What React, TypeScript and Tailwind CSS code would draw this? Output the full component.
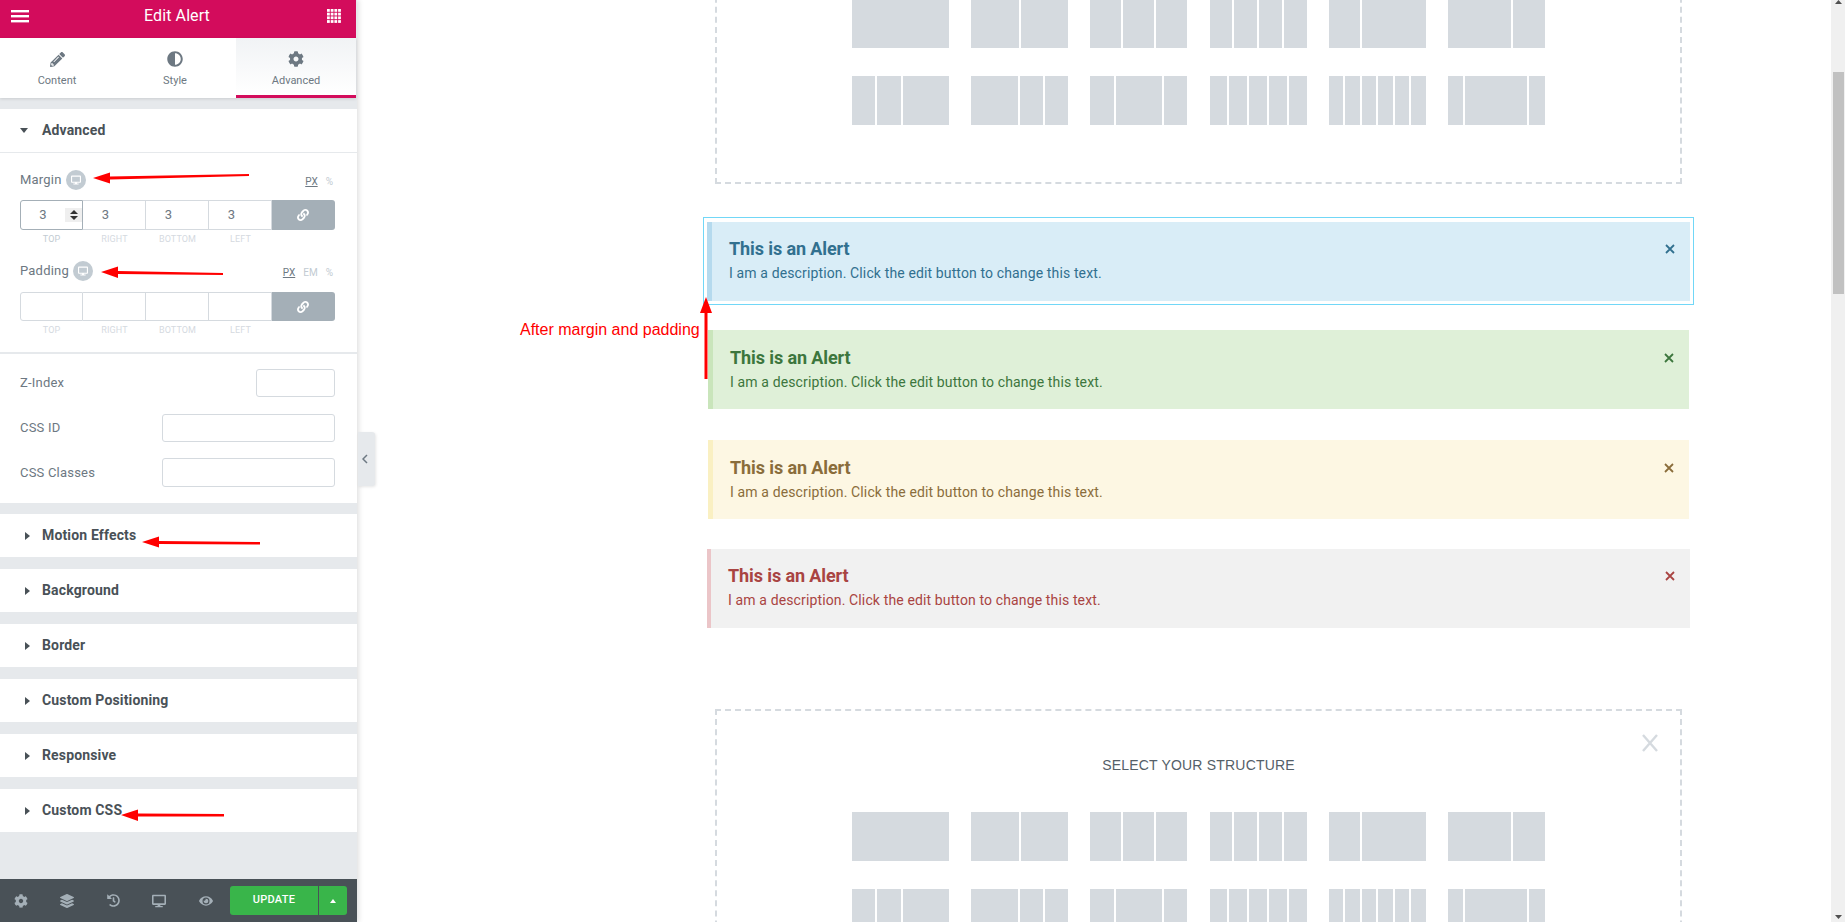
import React from "react";
import { FaPencilAlt, FaAdjust, FaCog, FaLayerGroup, FaHistory, FaDesktop, FaEye, FaLink } from "react-icons/fa";

const presets: string[][][] = [
  [
    ["flex-1"],
    ["flex-1", "flex-1"],
    ["flex-1", "flex-1", "flex-1"],
    ["flex-1", "flex-1", "flex-1", "flex-1"],
    ["flex-1", "flex-[2]"],
    ["flex-[2]", "flex-1"],
  ],
  [
    ["flex-1", "flex-1", "flex-[2]"],
    ["flex-[2]", "flex-1", "flex-1"],
    ["flex-1", "flex-[2]", "flex-1"],
    ["flex-1", "flex-1", "flex-1", "flex-1", "flex-1"],
    ["flex-1", "flex-1", "flex-1", "flex-1", "flex-1", "flex-1"],
    ["flex-1", "flex-[4]", "flex-1"],
  ],
];

function StructureBox({ className, title }: { className: string; title?: boolean }) {
  return (
    <div className={"relative shrink-0 w-[967px] ml-[358px] h-[288px] border-2 border-dashed border-[#d5dadf] " + className}>
      {title ? (
        <>
          <svg className="absolute left-[924px] top-[23px]" width="18" height="18" viewBox="0 0 18 18">
            <path d="M2 1 L16 17 M16 1 L2 17" stroke="#d5dadf" strokeWidth="2.4" fill="none" />
          </svg>
          <div className="pt-[44px] text-center text-[14px] tracking-[0.2px] leading-[20px] text-[#556068] font-['Liberation_Sans',sans-serif]">
            SELECT YOUR STRUCTURE
          </div>
        </>
      ) : (
        <div className="h-[64px]" />
      )}
      <div className="ml-[135px] mt-[37px] w-[693px] flex flex-col gap-[28px]">
        {presets.map((row, i) => (
          <div key={i} className="flex justify-between">
            {row.map((cols, j) => (
              <div key={j} className="flex gap-[2px] w-[97px] h-[49px]">
                {cols.map((c, k) => (
                  <div key={k} className={c + " bg-[#d5dadf]"} />
                ))}
              </div>
            ))}
          </div>
        ))}
      </div>
    </div>
  );
}

function Alert({ box, color, closeTop }: { box: string; color: string; closeTop: string }) {
  return (
    <div className={"relative h-[79px] pl-[17px] font-['Roboto',sans-serif] " + box}>
      <div className={"text-[18px] leading-[22px] font-bold tracking-[-0.1px] " + color}>This is an Alert</div>
      <div className={"mt-[3px] text-[14px] tracking-[0.13px] leading-[20px] " + color}>I am a description. Click the edit button to change this text.</div>
      <svg className={"absolute right-[15px] " + closeTop + " " + color} width="10" height="10" viewBox="0 0 10 10">
        <path d="M1 1 L9 9 M9 1 L1 9" stroke="currentColor" strokeWidth="1.8" fill="none" />
      </svg>
    </div>
  );
}

function Section({ title }: { title: string }) {
  return (
    <div className="mt-[12px] h-[43px] bg-white flex items-center pl-[25px]">
      <svg width="5" height="8" viewBox="0 0 5 8"><path d="M0 0 L5 4 L0 8 Z" fill="#495157" /></svg>
      <span className="ml-[12px] text-[14px] tracking-[0.15px] font-bold text-[#495157]">{title}</span>
    </div>
  );
}

function Dimensions({ values, h, focus }: { values: string[]; h: string; focus?: boolean }) {
  const labels = ["TOP", "RIGHT", "BOTTOM", "LEFT"];
  return (
    <div>
      <div className={"flex ml-[20px] w-[315px] " + h}>
        {labels.map((l, i) => (
          <div
            key={l}
            className={
              "relative w-[63px] flex items-center justify-center pr-[17px] text-[13px] text-[#6d7882] border-y border-r " +
              (i === 0 ? "rounded-l-[3px] border-l " : "") +
              (i === 0 && focus ? "border-[#a4afb7]" : "border-[#d5dadf]")
            }
          >
            {values[i]}
            {i === 0 && focus && (
              <div className="absolute right-0 top-[7px] w-[17px] h-[14px] bg-[#efefef] flex flex-col items-center justify-center gap-[2px]">
                <svg width="8" height="4" viewBox="0 0 8 4"><path d="M0 4 L4 0 L8 4 Z" fill="#333" /></svg>
                <svg width="8" height="4" viewBox="0 0 8 4"><path d="M0 0 L4 4 L8 0 Z" fill="#333" /></svg>
              </div>
            )}
          </div>
        ))}
        <div className="w-[63px] bg-[#a4afb7] rounded-r-[3px] flex items-center justify-center text-white pr-[2px]">
          <FaLink size={12} />
        </div>
      </div>
      <div className="flex ml-[20px] mt-[5px] h-[10px] items-center">
        {labels.map((l, i) => (
          <div key={l} className={"w-[63px] text-center text-[9px] tracking-[0.1px] " + (i === 0 && focus ? "text-[#c2cbd2]" : "text-[#d5dadf]")}>
            {l}
          </div>
        ))}
      </div>
    </div>
  );
}

function LabelRow({ label, units, className }: { label: string; units: string[]; className: string }) {
  return (
    <div className={"flex items-center h-[20px] ml-[20px] mr-[24px] " + className}>
      <span className="text-[13px] tracking-[0.2px] text-[#6d7882]">{label}</span>
      <span className="ml-[4px] w-[20px] h-[20px] rounded-full bg-[#c2cbd2] flex items-center justify-center text-white">
        <FaDesktop size={10} />
      </span>
      <div className="ml-auto flex gap-[8px] text-[10px] translate-y-[1px]">
        {units.map((u, i) => (
          <span key={u} className={i === 0 ? "text-[#6d7882] underline" : "text-[#c2cbd2]"}>{u}</span>
        ))}
      </div>
    </div>
  );
}

function Field({ label, w, h, className }: { label: string; w: string; h: string; className: string }) {
  return (
    <div className={"flex items-center justify-between ml-[20px] mr-[22px] " + className}>
      <span className="text-[13px] tracking-[0.2px] text-[#6d7882]">{label}</span>
      <div className={"border border-[#d5dadf] rounded-[3px] " + w + " " + h} />
    </div>
  );
}

function Tab({ icon, label, width, active }: { icon: React.ReactNode; label: string; width: string; active?: boolean }) {
  return (
    <div
      className={
        "flex flex-col items-center pt-[12px] h-[60px] text-[#6d7882] " +
        width +
        (active ? " bg-gradient-to-b from-[#f1f3f5] to-white border-b-[3px] border-[#d30c5c]" : "")
      }
    >
      <div className="h-[18px] flex items-center">{icon}</div>
      <div className="mt-[5px] text-[11px] leading-[16px]">{label}</div>
    </div>
  );
}

export default function App() {
  return (
    <div className="relative flex w-screen h-screen overflow-hidden bg-white font-['Roboto',sans-serif]">
      {/* Panel */}
      <aside className="relative z-10 shrink-0 w-[357px] h-full flex flex-col bg-[#e6e9ec] shadow-[2px_0_5px_rgba(0,0,0,0.12)]">
        <div className="h-[38px] w-[356px] bg-[#d30c5c] flex items-center justify-between pl-[11px] pr-[15px] pb-[6px] text-white">
          <svg width="18" height="13" viewBox="0 0 18 13" fill="white">
            <rect width="18" height="2.4" y="0" />
            <rect width="18" height="2.4" y="5" />
            <rect width="18" height="2.4" y="10" />
          </svg>
          <span className="text-[16px] font-normal tracking-[0.1px] -translate-x-[1px]">Edit Alert</span>
          <svg width="14" height="14" viewBox="0 0 14 14" fill="white">
            {[0, 3.7, 7.4, 11.1].map((y) =>
              [0, 3.7, 7.4, 11.1].map((x) => <rect key={x + "-" + y} x={x} y={y} width="2.8" height="2.8" />)
            )}
          </svg>
        </div>
        <div className="flex w-[356px] bg-white shadow-[0_1px_3px_rgba(0,0,0,0.12)]">
          <Tab icon={<FaPencilAlt size={15} />} label="Content" width="w-[114px]" />
          <Tab icon={<FaAdjust size={16} />} label="Style" width="w-[122px]" />
          <Tab icon={<FaCog size={16} />} label="Advanced" width="w-[120px]" active />
        </div>

        <div className="mt-[11px] bg-white h-[394px]">
          <div className="h-[44px] border-b border-[#e6e9ec] flex items-center pl-[20px]">
            <svg width="8" height="5" viewBox="0 0 8 5"><path d="M0 0 L8 0 L4 5 Z" fill="#495157" /></svg>
            <span className="ml-[14px] text-[14px] tracking-[0.15px] font-bold text-[#495157]">Advanced</span>
          </div>
          <LabelRow label="Margin" units={["PX", "%"]} className="mt-[17px]" />
          <div className="mt-[10px]">
            <Dimensions values={["3", "3", "3", "3"]} h="h-[30px]" focus />
          </div>
          <LabelRow label="Padding" units={["PX", "EM", "%"]} className="mt-[16px]" />
          <div className="mt-[11px]">
            <Dimensions values={["", "", "", ""]} h="h-[29px]" />
          </div>
          <div className="mt-[16px] h-[2px] bg-[#e6e9ec]" />
          <Field label="Z-Index" w="w-[79px]" h="h-[28px]" className="mt-[15px]" />
          <Field label="CSS ID" w="w-[173px]" h="h-[28px]" className="mt-[17px]" />
          <Field label="CSS Classes" w="w-[173px]" h="h-[29px]" className="mt-[16px]" />
        </div>
        <div className="-mt-[1px]">
          <Section title="Motion Effects" />
          <Section title="Background" />
          <Section title="Border" />
          <Section title="Custom Positioning" />
          <Section title="Responsive" />
          <Section title="Custom CSS" />
        </div>

        <div className="mt-auto h-[43px] bg-[#495157] flex items-center text-[#a4afb7] relative">
          <div className="flex items-center -ml-[2px] mr-[2px]">
            <span className="w-[46px] flex justify-center"><FaCog size={14} /></span>
            <span className="w-[46px] flex justify-center"><FaLayerGroup size={14} /></span>
            <span className="w-[46px] flex justify-center"><FaHistory size={13} /></span>
            <span className="w-[46px] flex justify-center"><FaDesktop size={14} /></span>
            <span className="w-[46px] flex justify-center pl-[1px]"><FaEye size={14} /></span>
          </div>
          <div className="flex h-[29px]">
            <div className="w-[88px] bg-[#39b54a] rounded-l-[3px] flex items-center justify-center text-white text-[11px] tracking-[0.3px] font-medium">
              UPDATE
            </div>
            <div className="ml-[1px] w-[28px] bg-[#39b54a] rounded-r-[3px] flex items-center justify-center">
              <svg width="6" height="4" viewBox="0 0 6 4"><path d="M0 4 L3 0 L6 4 Z" fill="white" /></svg>
            </div>
          </div>
        </div>

        {/* collapse handle */}
        <div className="absolute left-[358px] top-[432px] w-[17px] h-[54px] bg-[#e6e9ec] rounded-r-[3px] shadow-[1px_1px_3px_rgba(0,0,0,0.1)] flex items-center justify-center pr-[3px]">
          <svg width="6" height="10" viewBox="0 0 6 10"><path d="M5 1 L1 5 L5 9" stroke="#6d7882" strokeWidth="1.5" fill="none" /></svg>
        </div>
      </aside>

      {/* Canvas */}
      <main className="flex-1 min-w-0 h-full overflow-hidden flex flex-col">
        <StructureBox className="-mt-[104px]" />
        <div className="shrink-0 mt-[33px] ml-[346px] w-[991px] h-[88px] border border-[#71d7f7] pt-[4px] pl-[3px] pr-[3px]">
          <Alert box="pt-[16px] bg-[#d9edf7] border-l-[5px] border-[#b5daee]" color="text-[#31708f]" closeTop="top-[22px]" />
        </div>
        <div className="shrink-0 mt-[25px] ml-[351px] w-[981px]">
          <Alert box="pt-[17px] bg-[#dff0d8] border-l-[5px] border-[#c9e5bb]" color="text-[#3c763d]" closeTop="top-[23px]" />
        </div>
        <div className="shrink-0 mt-[31px] ml-[351px] w-[981px]">
          <Alert box="pt-[17px] bg-[#fdf7e3] border-l-[5px] border-[#faf0c2]" color="text-[#8a6d3b]" closeTop="top-[23px]" />
        </div>
        <div className="shrink-0 mt-[30px] ml-[350px] w-[983px]">
          <Alert box="pt-[16px] bg-[#f1f1f1] border-l-[4px] border-[#ebc5c8]" color="text-[#a94442]" closeTop="top-[22px]" />
        </div>
        <StructureBox className="mt-[81px]" title />
      </main>

      {/* Scrollbar */}
      <div className="shrink-0 w-[14px] h-full bg-[#f0f0f0] flex flex-col">
        <svg className="ml-[4px]" width="7" height="4" viewBox="0 0 7 4"><path d="M0 4 L3.5 0 L7 4 Z" fill="#505050" /></svg>
        <div className="mt-[68px] ml-[2px] w-[11px] h-[222px] bg-[#c1c1c1]" />
        <svg className="mt-auto mb-[3px] ml-[4px]" width="7" height="4" viewBox="0 0 7 4"><path d="M0 0 L3.5 4 L7 0 Z" fill="#505050" /></svg>
      </div>

      {/* Annotations */}
      <svg className="absolute inset-0 z-20 pointer-events-none" width="1845" height="922" viewBox="0 0 1845 922">
        <g fill="#ff0000">
          <polygon points="93,178 110,172.5 110,176.5 249,174 249,176 110,179.5 110,183.5" />
          <polygon points="101,272 118,266.5 118,271 223,273 223,275 118,274 118,278" />
          <polygon points="142,542 159,536.5 159,541 260,542 260,544.5 159,544 159,547.5" />
          <polygon points="121,815 138,809.5 138,813.5 224,814 224,816.5 138,816.5 138,821" />
          <polygon points="706,297 712,313 707.5,313 707.5,379 704.5,379 704.5,313 700,313" />
        </g>
      </svg>
      <div className="absolute z-20 left-[520px] top-[321px] text-[16px] leading-[18px] text-[#ff0000] font-['Liberation_Sans',sans-serif]">
        After margin and padding
      </div>
    </div>
  );
}
